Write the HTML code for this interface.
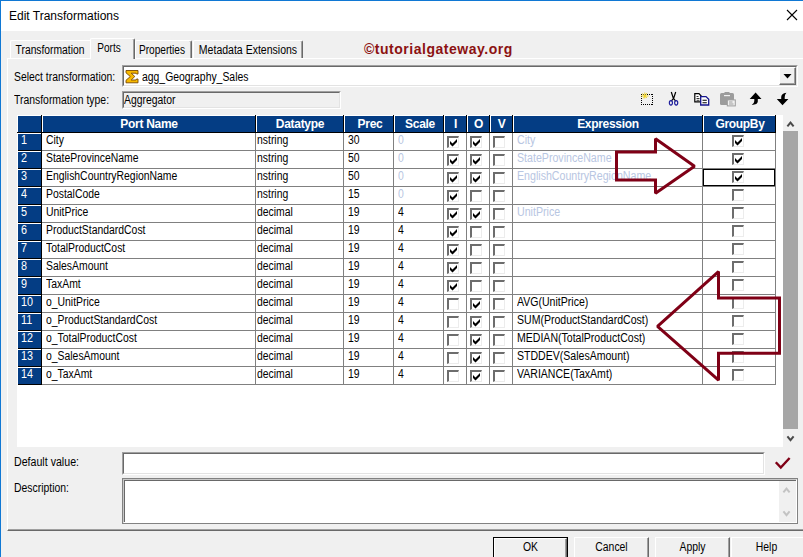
<!DOCTYPE html>
<html><head><meta charset="utf-8"><title>Edit Transformations</title>
<style>
html,body{margin:0;padding:0;}
body{width:803px;height:557px;overflow:hidden;background:#f0f0f0;position:relative;font-family:"Liberation Sans",sans-serif;font-size:12px;color:#000;}
div,span{position:absolute;box-sizing:border-box;white-space:nowrap;}
svg{position:absolute;overflow:visible;}
.t{line-height:14px;height:14px;transform:scaleX(.867);transform-origin:0 0;}
.tc{text-align:center;transform-origin:50% 0;}
.hd{color:#fff;font-weight:bold;font-size:12px;text-align:center;line-height:16px;height:16px;top:116px;letter-spacing:-0.3px;}
.vl{width:1px;background:#808080;top:133px;height:252px;}
.hl{height:1px;background:#808080;left:42px;width:734px;}
.hs{width:2px;top:115px;height:17px;border-left:1px solid #000;background:#fff;}
.cb{width:12px;height:12px;background:#fff;border-top:2px solid #6d6d6d;border-left:2px solid #6d6d6d;border-right:1px solid #ececec;border-bottom:1px solid #ececec;}
.ck{left:1px;top:1px;}
.btn{top:537px;height:24px;background:#f0f0f0;border-top:1px solid #fff;border-left:1px solid #fff;border-right:1px solid #696969;box-shadow:inset -1px 0 0 #a0a0a0;}
.dis{color:#b8c6e2;}
.blue{color:#1a4fb0;}
</style></head><body>

<div style="left:0;top:0;width:803px;height:31px;background:#fff;"></div>
<div style="left:0;top:0;width:803px;height:1px;background:#1078d4;"></div>
<div style="left:0;top:0;width:1px;height:557px;background:#1078d4;"></div>
<div style="left:9px;top:8px;font-size:12px;line-height:16px;height:16px;">Edit Transformations</div>
<svg style="left:786px;top:9px" width="12" height="12" viewBox="0 0 12 12"><path d="M1 1 L11 11 M11 1 L1 11" stroke="#000" stroke-width="1.1" fill="none"/></svg>
<div style="left:7px;top:58px;width:820px;height:473px;border-top:1px solid #fff;border-left:1px solid #fff;border-bottom:1px solid #696969;"></div>
<div style="left:8px;top:529px;width:820px;height:1px;background:#a0a0a0;"></div>
<div style="left:10px;top:40px;width:82px;height:18px;border-top:1px solid #fff;border-left:1px solid #fff;border-radius:2px 2px 0 0;"></div>
<div class="t tc " style="left:-10.200000000000003px;width:120.0px;top:42.7px;transform:scaleX(0.858);">Transformation</div>
<div style="left:135px;top:40px;width:57px;height:18px;border-top:1px solid #fff;border-left:1px solid #fff;border-right:1px solid #696969;box-shadow:inset -1px 0 0 #a0a0a0;border-radius:2px 2px 0 0;"></div>
<div class="t tc " style="left:102.4px;width:120.0px;top:42.7px;transform:scaleX(0.843);">Properties</div>
<div style="left:193px;top:40px;width:110px;height:18px;border-top:1px solid #fff;border-left:1px solid #fff;border-right:1px solid #696969;box-shadow:inset -1px 0 0 #a0a0a0;border-radius:2px 2px 0 0;"></div>
<div class="t tc " style="left:187.8px;width:120.0px;top:42.7px;transform:scaleX(0.877);">Metadata Extensions</div>
<div style="left:90px;top:38px;width:45px;height:21px;background:#f0f0f0;border-top:1px solid #fff;border-left:1px solid #fff;border-right:1px solid #696969;box-shadow:inset -1px 0 0 #a0a0a0;border-radius:2px 2px 0 0;"></div>
<div class="t tc " style="left:48.8px;width:120.00000000000001px;top:40.7px;transform:scaleX(0.838);">Ports</div>
<div style="left:364px;top:40px;font-size:14px;font-weight:bold;color:#8c1212;letter-spacing:0.520px;line-height:18px;">©tutorialgateway.org</div>
<div class="t " style="left:14px;top:69.7px;">Select transformation:</div>
<div style="left:122px;top:65px;width:676px;height:22px;background:#fff;border-top:1px solid #a0a0a0;border-left:1px solid #a0a0a0;border-right:1px solid #fff;border-bottom:1px solid #fff;"></div>
<div style="left:123px;top:66px;width:674px;height:20px;border-top:1px solid #696969;border-left:1px solid #696969;border-right:1px solid #e3e3e3;border-bottom:1px solid #e3e3e3;"></div>
<div class="t " style="left:142px;top:69.7px;">agg_Geography_Sales</div>
<svg style="left:125px;top:68px" width="15" height="16" viewBox="0 0 15 16"><path d="M1 2.500 H13 V6 H11.500 L11 5.200 H6.200 L9.800 8.500 L6.200 12 H11 L11.500 11 H13 V14.800 H1 V12.300 L5.300 8.500 L1 4.800 Z" fill="#f7b900" stroke="#7a4a00" stroke-width="0.900"/></svg>
<div style="left:779px;top:67px;width:17px;height:18px;background:#f0f0f0;border-top:1px solid #fff;border-left:1px solid #fff;border-right:1px solid #696969;border-bottom:1px solid #696969;box-shadow:inset -1px -1px 0 #a0a0a0;"></div>
<svg style="left:783px;top:74px" width="9" height="5" viewBox="0 0 9 5"><path d="M0.5 0 H8.5 L4.5 4.5 Z" fill="#000"/></svg>
<div class="t " style="left:14px;top:92.7px;">Transformation type:</div>
<div style="left:122px;top:91px;width:219px;height:18px;background:#f0f0f0;border-top:1px solid #a0a0a0;border-left:1px solid #a0a0a0;border-right:1px solid #fff;border-bottom:1px solid #fff;"></div>
<div style="left:123px;top:92px;width:217px;height:16px;border-top:1px solid #696969;border-left:1px solid #696969;border-right:1px solid #e3e3e3;border-bottom:1px solid #e3e3e3;"></div>
<div class="t " style="left:124px;top:92.7px;">Aggregator</div>
<svg style="left:638px;top:88px" width="155" height="22" viewBox="0 0 155 22">
<path d="M3 6.500 H15 M3 16.500 H15 M3.500 6 V17 M14.500 6 V17" fill="none" stroke="#000" stroke-width="1" stroke-dasharray="1 1" shape-rendering="crispEdges"/>
<path d="M4 5.500 L9 10 M9 5 L5 10.500 M6.800 4.500 V10.500 M3 8 H10.500" fill="none" stroke="#f0d21c" stroke-width="0.900"/>
<path d="M33.300 4 L35.400 10.500 L37.600 12.800 M37.700 4 L35.600 10.500 L33.400 12.800" fill="none" stroke="#000" stroke-width="1.200"/>
<g fill="none" stroke="#1c1c9c" stroke-width="1.150"><ellipse cx="32.900" cy="14.800" rx="1.550" ry="2.250"/><ellipse cx="38.200" cy="14.800" rx="1.550" ry="2.250"/></g>
<path d="M56.800 5.700 H61 L63.200 8 V13.900 H56.800 Z" fill="#fff" stroke="#000" stroke-width="1.200"/>
<path d="M58.500 8.500 H60.500 M58.500 10.500 H61.500 M58.500 12.300 H61.500" fill="none" stroke="#000" stroke-width="0.800"/>
<path d="M62.700 8.600 H68 L70.700 11.300 V17 H62.700 Z" fill="#fff" stroke="#14148c" stroke-width="1.300"/>
<path d="M64.500 12.300 H68.800 M64.500 14.700 H68.800" fill="none" stroke="#000" stroke-width="1.100"/>
<rect x="82" y="5" width="14" height="12" rx="1.500" fill="#9c9c9c"/>
<rect x="86.500" y="4" width="5" height="2" fill="#9c9c9c"/>
<path d="M86 7.600 H92" stroke="#f0f0f0" stroke-width="1.200" fill="none"/>
<rect x="89.300" y="11.900" width="8" height="6" fill="#f0f0f0" stroke="#9c9c9c" stroke-width="1"/>
<path d="M91 14 H94.500 M91 16 H95.500" stroke="#9c9c9c" stroke-width="1" fill="none"/>
<path d="M117.600 4.500 L123.500 11 H119.800 V13.500 Q119.800 16.500 113.700 17 Q116.300 15.500 116.300 13 V11 H111.700 Z" fill="#000"/>
<path d="M144.500 17.300 L138.800 11 H143.200 V9 Q143.200 5.500 148.400 4.700 Q146.700 6.500 146.700 9 V11 H150.400 Z" fill="#000"/>
</svg>
<div style="left:17px;top:115px;width:766px;height:332px;background:#fff;"></div>
<div style="left:18px;top:116px;width:757px;height:16px;background:#043d84;"></div>
<div style="left:17px;top:132px;width:759px;height:1px;background:#000;"></div>
<div style="left:775px;top:115px;width:1px;height:18px;background:#000;"></div>
<div style="left:18px;top:133px;width:23px;height:251px;background:#043d84;"></div>
<div style="left:41px;top:115px;width:1px;height:270px;background:#000;"></div>
<div style="left:18px;top:133px;width:23px;height:1px;background:#fff;"></div>
<div style="left:42px;top:116px;width:1px;height:16px;background:#fff;"></div>
<div class="hs" style="left:255px;"></div>
<div class="hs" style="left:343px;"></div>
<div class="hs" style="left:393px;"></div>
<div class="hs" style="left:443px;"></div>
<div class="hs" style="left:466px;"></div>
<div class="hs" style="left:489px;"></div>
<div class="hs" style="left:512px;"></div>
<div class="hs" style="left:702px;"></div>
<div class="hd" style="left:43px;width:212px;">Port Name</div>
<div class="hd" style="left:257px;width:86px;">Datatype</div>
<div class="hd" style="left:345px;width:50px;">Prec</div>
<div class="hd" style="left:397px;width:46px;">Scale</div>
<div class="hd" style="left:445px;width:21px;">I</div>
<div class="hd" style="left:468px;width:21px;">O</div>
<div class="hd" style="left:491px;width:21px;">V</div>
<div class="hd" style="left:514px;width:188px;">Expression</div>
<div class="hd" style="left:704px;width:72px;">GroupBy</div>
<div class="vl" style="left:255px;"></div>
<div class="vl" style="left:343px;"></div>
<div class="vl" style="left:393px;"></div>
<div class="vl" style="left:443px;"></div>
<div class="vl" style="left:466px;"></div>
<div class="vl" style="left:489px;"></div>
<div class="vl" style="left:512px;"></div>
<div class="vl" style="left:702px;"></div>
<div class="vl" style="left:775px;"></div>
<div class="hl" style="top:150px;"></div>
<div style="left:18px;top:150px;width:23px;height:1px;background:#000;"></div>
<div style="left:18px;top:151px;width:23px;height:1px;background:#fff;"></div>
<div class="hl" style="top:168px;"></div>
<div style="left:18px;top:168px;width:23px;height:1px;background:#000;"></div>
<div style="left:18px;top:169px;width:23px;height:1px;background:#fff;"></div>
<div class="hl" style="top:186px;"></div>
<div style="left:18px;top:186px;width:23px;height:1px;background:#000;"></div>
<div style="left:18px;top:187px;width:23px;height:1px;background:#fff;"></div>
<div class="hl" style="top:204px;"></div>
<div style="left:18px;top:204px;width:23px;height:1px;background:#000;"></div>
<div style="left:18px;top:205px;width:23px;height:1px;background:#fff;"></div>
<div class="hl" style="top:222px;"></div>
<div style="left:18px;top:222px;width:23px;height:1px;background:#000;"></div>
<div style="left:18px;top:223px;width:23px;height:1px;background:#fff;"></div>
<div class="hl" style="top:240px;"></div>
<div style="left:18px;top:240px;width:23px;height:1px;background:#000;"></div>
<div style="left:18px;top:241px;width:23px;height:1px;background:#fff;"></div>
<div class="hl" style="top:258px;"></div>
<div style="left:18px;top:258px;width:23px;height:1px;background:#000;"></div>
<div style="left:18px;top:259px;width:23px;height:1px;background:#fff;"></div>
<div class="hl" style="top:276px;"></div>
<div style="left:18px;top:276px;width:23px;height:1px;background:#000;"></div>
<div style="left:18px;top:277px;width:23px;height:1px;background:#fff;"></div>
<div class="hl" style="top:294px;"></div>
<div style="left:18px;top:294px;width:23px;height:1px;background:#000;"></div>
<div style="left:18px;top:295px;width:23px;height:1px;background:#fff;"></div>
<div class="hl" style="top:312px;"></div>
<div style="left:18px;top:312px;width:23px;height:1px;background:#000;"></div>
<div style="left:18px;top:313px;width:23px;height:1px;background:#fff;"></div>
<div class="hl" style="top:330px;"></div>
<div style="left:18px;top:330px;width:23px;height:1px;background:#000;"></div>
<div style="left:18px;top:331px;width:23px;height:1px;background:#fff;"></div>
<div class="hl" style="top:348px;"></div>
<div style="left:18px;top:348px;width:23px;height:1px;background:#000;"></div>
<div style="left:18px;top:349px;width:23px;height:1px;background:#fff;"></div>
<div class="hl" style="top:366px;"></div>
<div style="left:18px;top:366px;width:23px;height:1px;background:#000;"></div>
<div style="left:18px;top:367px;width:23px;height:1px;background:#fff;"></div>
<div class="hl" style="top:384px;"></div>
<div style="left:18px;top:384px;width:23px;height:1px;background:#000;"></div>
<div class="t " style="left:20.5px;top:132.7px;color:#fff;transform:scaleX(.900);">1</div>
<div class="t " style="left:46px;top:132.7px;">City</div>
<div class="t " style="left:257px;top:132.7px;">nstring</div>
<div class="t " style="left:348px;top:132.7px;">30</div>
<div class="t dis" style="left:398px;top:132.7px;">0</div>
<div class="cb" style="left:447px;top:136px;"><svg class="ck" width="8" height="8" viewBox="0 0 8 8"><path d="M0 2 L2.500 4.500 L7 0 V3 L2.500 7.500 L0 5 Z" fill="#000"/></svg></div>
<div class="cb" style="left:470px;top:136px;"><svg class="ck" width="8" height="8" viewBox="0 0 8 8"><path d="M0 2 L2.500 4.500 L7 0 V3 L2.500 7.500 L0 5 Z" fill="#000"/></svg></div>
<div class="cb" style="left:493px;top:136px;"></div>
<div class="t dis" style="left:517px;top:132.7px;transform:scaleX(0.886);">City</div>
<div class="cb" style="left:732px;top:135px;"><svg class="ck" width="8" height="8" viewBox="0 0 8 8"><path d="M0 2 L2.500 4.500 L7 0 V3 L2.500 7.500 L0 5 Z" fill="#000"/></svg></div>
<div class="t " style="left:20.5px;top:150.7px;color:#fff;transform:scaleX(.900);">2</div>
<div class="t " style="left:46px;top:150.7px;">StateProvinceName</div>
<div class="t " style="left:257px;top:150.7px;">nstring</div>
<div class="t " style="left:348px;top:150.7px;">50</div>
<div class="t dis" style="left:398px;top:150.7px;">0</div>
<div class="cb" style="left:447px;top:154px;"><svg class="ck" width="8" height="8" viewBox="0 0 8 8"><path d="M0 2 L2.500 4.500 L7 0 V3 L2.500 7.500 L0 5 Z" fill="#000"/></svg></div>
<div class="cb" style="left:470px;top:154px;"><svg class="ck" width="8" height="8" viewBox="0 0 8 8"><path d="M0 2 L2.500 4.500 L7 0 V3 L2.500 7.500 L0 5 Z" fill="#000"/></svg></div>
<div class="cb" style="left:493px;top:154px;"></div>
<div class="t dis" style="left:517px;top:150.7px;transform:scaleX(0.886);">StateProvinceName</div>
<div class="cb" style="left:732px;top:153px;"><svg class="ck" width="8" height="8" viewBox="0 0 8 8"><path d="M0 2 L2.500 4.500 L7 0 V3 L2.500 7.500 L0 5 Z" fill="#000"/></svg></div>
<div class="t " style="left:20.5px;top:168.7px;color:#fff;transform:scaleX(.900);">3</div>
<div class="t " style="left:46px;top:168.7px;">EnglishCountryRegionName</div>
<div class="t " style="left:257px;top:168.7px;">nstring</div>
<div class="t " style="left:348px;top:168.7px;">50</div>
<div class="t dis" style="left:398px;top:168.7px;">0</div>
<div class="cb" style="left:447px;top:172px;"><svg class="ck" width="8" height="8" viewBox="0 0 8 8"><path d="M0 2 L2.500 4.500 L7 0 V3 L2.500 7.500 L0 5 Z" fill="#000"/></svg></div>
<div class="cb" style="left:470px;top:172px;"><svg class="ck" width="8" height="8" viewBox="0 0 8 8"><path d="M0 2 L2.500 4.500 L7 0 V3 L2.500 7.500 L0 5 Z" fill="#000"/></svg></div>
<div class="cb" style="left:493px;top:172px;"></div>
<div class="t dis" style="left:517px;top:168.7px;transform:scaleX(0.886);">EnglishCountryRegionName</div>
<div class="cb" style="left:732px;top:171px;"><svg class="ck" width="8" height="8" viewBox="0 0 8 8"><path d="M0 2 L2.500 4.500 L7 0 V3 L2.500 7.500 L0 5 Z" fill="#000"/></svg></div>
<div class="t " style="left:20.5px;top:186.7px;color:#fff;transform:scaleX(.900);">4</div>
<div class="t " style="left:46px;top:186.7px;">PostalCode</div>
<div class="t " style="left:257px;top:186.7px;">nstring</div>
<div class="t " style="left:348px;top:186.7px;">15</div>
<div class="t dis" style="left:398px;top:186.7px;">0</div>
<div class="cb" style="left:447px;top:190px;"><svg class="ck" width="8" height="8" viewBox="0 0 8 8"><path d="M0 2 L2.500 4.500 L7 0 V3 L2.500 7.500 L0 5 Z" fill="#000"/></svg></div>
<div class="cb" style="left:470px;top:190px;"></div>
<div class="cb" style="left:493px;top:190px;"></div>
<div class="cb" style="left:732px;top:189px;"></div>
<div class="t " style="left:20.5px;top:204.7px;color:#fff;transform:scaleX(.900);">5</div>
<div class="t " style="left:46px;top:204.7px;">UnitPrice</div>
<div class="t " style="left:257px;top:204.7px;">decimal</div>
<div class="t " style="left:348px;top:204.7px;">19</div>
<div class="t " style="left:398px;top:204.7px;">4</div>
<div class="cb" style="left:447px;top:208px;"><svg class="ck" width="8" height="8" viewBox="0 0 8 8"><path d="M0 2 L2.500 4.500 L7 0 V3 L2.500 7.500 L0 5 Z" fill="#000"/></svg></div>
<div class="cb" style="left:470px;top:208px;"><svg class="ck" width="8" height="8" viewBox="0 0 8 8"><path d="M0 2 L2.500 4.500 L7 0 V3 L2.500 7.500 L0 5 Z" fill="#000"/></svg></div>
<div class="cb" style="left:493px;top:208px;"></div>
<div class="t dis" style="left:517px;top:204.7px;transform:scaleX(0.886);">UnitPrice</div>
<div class="cb" style="left:732px;top:207px;"></div>
<div class="t " style="left:20.5px;top:222.7px;color:#fff;transform:scaleX(.900);">6</div>
<div class="t " style="left:46px;top:222.7px;">ProductStandardCost</div>
<div class="t " style="left:257px;top:222.7px;">decimal</div>
<div class="t " style="left:348px;top:222.7px;">19</div>
<div class="t " style="left:398px;top:222.7px;">4</div>
<div class="cb" style="left:447px;top:226px;"><svg class="ck" width="8" height="8" viewBox="0 0 8 8"><path d="M0 2 L2.500 4.500 L7 0 V3 L2.500 7.500 L0 5 Z" fill="#000"/></svg></div>
<div class="cb" style="left:470px;top:226px;"></div>
<div class="cb" style="left:493px;top:226px;"></div>
<div class="cb" style="left:732px;top:225px;"></div>
<div class="t " style="left:20.5px;top:240.7px;color:#fff;transform:scaleX(.900);">7</div>
<div class="t " style="left:46px;top:240.7px;">TotalProductCost</div>
<div class="t " style="left:257px;top:240.7px;">decimal</div>
<div class="t " style="left:348px;top:240.7px;">19</div>
<div class="t " style="left:398px;top:240.7px;">4</div>
<div class="cb" style="left:447px;top:244px;"><svg class="ck" width="8" height="8" viewBox="0 0 8 8"><path d="M0 2 L2.500 4.500 L7 0 V3 L2.500 7.500 L0 5 Z" fill="#000"/></svg></div>
<div class="cb" style="left:470px;top:244px;"></div>
<div class="cb" style="left:493px;top:244px;"></div>
<div class="cb" style="left:732px;top:243px;"></div>
<div class="t " style="left:20.5px;top:258.7px;color:#fff;transform:scaleX(.900);">8</div>
<div class="t " style="left:46px;top:258.7px;">SalesAmount</div>
<div class="t " style="left:257px;top:258.7px;">decimal</div>
<div class="t " style="left:348px;top:258.7px;">19</div>
<div class="t " style="left:398px;top:258.7px;">4</div>
<div class="cb" style="left:447px;top:262px;"><svg class="ck" width="8" height="8" viewBox="0 0 8 8"><path d="M0 2 L2.500 4.500 L7 0 V3 L2.500 7.500 L0 5 Z" fill="#000"/></svg></div>
<div class="cb" style="left:470px;top:262px;"></div>
<div class="cb" style="left:493px;top:262px;"></div>
<div class="cb" style="left:732px;top:261px;"></div>
<div class="t " style="left:20.5px;top:276.7px;color:#fff;transform:scaleX(.900);">9</div>
<div class="t " style="left:46px;top:276.7px;">TaxAmt</div>
<div class="t " style="left:257px;top:276.7px;">decimal</div>
<div class="t " style="left:348px;top:276.7px;">19</div>
<div class="t " style="left:398px;top:276.7px;">4</div>
<div class="cb" style="left:447px;top:280px;"><svg class="ck" width="8" height="8" viewBox="0 0 8 8"><path d="M0 2 L2.500 4.500 L7 0 V3 L2.500 7.500 L0 5 Z" fill="#000"/></svg></div>
<div class="cb" style="left:470px;top:280px;"></div>
<div class="cb" style="left:493px;top:280px;"></div>
<div class="cb" style="left:732px;top:279px;"></div>
<div class="t " style="left:20.5px;top:294.7px;color:#fff;transform:scaleX(.900);">10</div>
<div class="t " style="left:46px;top:294.7px;">o_UnitPrice</div>
<div class="t " style="left:257px;top:294.7px;">decimal</div>
<div class="t " style="left:348px;top:294.7px;">19</div>
<div class="t " style="left:398px;top:294.7px;">4</div>
<div class="cb" style="left:447px;top:298px;"></div>
<div class="cb" style="left:470px;top:298px;"><svg class="ck" width="8" height="8" viewBox="0 0 8 8"><path d="M0 2 L2.500 4.500 L7 0 V3 L2.500 7.500 L0 5 Z" fill="#000"/></svg></div>
<div class="cb" style="left:493px;top:298px;"></div>
<div class="t " style="left:517px;top:294.7px;transform:scaleX(0.879);">AVG(UnitPrice)</div>
<div class="cb" style="left:732px;top:297px;"></div>
<div class="t " style="left:20.5px;top:312.7px;color:#fff;transform:scaleX(.900);">11</div>
<div class="t " style="left:46px;top:312.7px;">o_ProductStandardCost</div>
<div class="t " style="left:257px;top:312.7px;">decimal</div>
<div class="t " style="left:348px;top:312.7px;">19</div>
<div class="t " style="left:398px;top:312.7px;">4</div>
<div class="cb" style="left:447px;top:316px;"></div>
<div class="cb" style="left:470px;top:316px;"><svg class="ck" width="8" height="8" viewBox="0 0 8 8"><path d="M0 2 L2.500 4.500 L7 0 V3 L2.500 7.500 L0 5 Z" fill="#000"/></svg></div>
<div class="cb" style="left:493px;top:316px;"></div>
<div class="t " style="left:517px;top:312.7px;transform:scaleX(0.879);">SUM(ProductStandardCost)</div>
<div class="cb" style="left:732px;top:315px;"></div>
<div class="t " style="left:20.5px;top:330.7px;color:#fff;transform:scaleX(.900);">12</div>
<div class="t " style="left:46px;top:330.7px;">o_TotalProductCost</div>
<div class="t " style="left:257px;top:330.7px;">decimal</div>
<div class="t " style="left:348px;top:330.7px;">19</div>
<div class="t " style="left:398px;top:330.7px;">4</div>
<div class="cb" style="left:447px;top:334px;"></div>
<div class="cb" style="left:470px;top:334px;"><svg class="ck" width="8" height="8" viewBox="0 0 8 8"><path d="M0 2 L2.500 4.500 L7 0 V3 L2.500 7.500 L0 5 Z" fill="#000"/></svg></div>
<div class="cb" style="left:493px;top:334px;"></div>
<div class="t " style="left:517px;top:330.7px;transform:scaleX(0.879);">MEDIAN(TotalProductCost)</div>
<div class="cb" style="left:732px;top:333px;"></div>
<div class="t " style="left:20.5px;top:348.7px;color:#fff;transform:scaleX(.900);">13</div>
<div class="t " style="left:46px;top:348.7px;">o_SalesAmount</div>
<div class="t " style="left:257px;top:348.7px;">decimal</div>
<div class="t " style="left:348px;top:348.7px;">19</div>
<div class="t " style="left:398px;top:348.7px;">4</div>
<div class="cb" style="left:447px;top:352px;"></div>
<div class="cb" style="left:470px;top:352px;"><svg class="ck" width="8" height="8" viewBox="0 0 8 8"><path d="M0 2 L2.500 4.500 L7 0 V3 L2.500 7.500 L0 5 Z" fill="#000"/></svg></div>
<div class="cb" style="left:493px;top:352px;"></div>
<div class="t " style="left:517px;top:348.7px;transform:scaleX(0.879);">STDDEV(SalesAmount)</div>
<div class="cb" style="left:732px;top:351px;"></div>
<div class="t " style="left:20.5px;top:366.7px;color:#fff;transform:scaleX(.900);">14</div>
<div class="t " style="left:46px;top:366.7px;">o_TaxAmt</div>
<div class="t " style="left:257px;top:366.7px;">decimal</div>
<div class="t " style="left:348px;top:366.7px;">19</div>
<div class="t " style="left:398px;top:366.7px;">4</div>
<div class="cb" style="left:447px;top:370px;"></div>
<div class="cb" style="left:470px;top:370px;"><svg class="ck" width="8" height="8" viewBox="0 0 8 8"><path d="M0 2 L2.500 4.500 L7 0 V3 L2.500 7.500 L0 5 Z" fill="#000"/></svg></div>
<div class="cb" style="left:493px;top:370px;"></div>
<div class="t " style="left:517px;top:366.7px;transform:scaleX(0.879);">VARIANCE(TaxAmt)</div>
<div class="cb" style="left:732px;top:369px;"></div>
<div style="left:702.600px;top:168.600px;width:72.700px;height:17.500px;border:1.700px solid #000;"></div>
<div style="left:783px;top:115px;width:16px;height:332px;background:#f0f0f0;"></div>
<div style="left:783px;top:131px;width:15px;height:298px;background:#a6a6a6;"></div>
<svg style="left:785px;top:119px" width="12" height="10" viewBox="0 0 12 10"><path d="M2.400 7.400 L5.500 3.600 L8.600 7.400" stroke="#4a4a4a" stroke-width="2" fill="none"/></svg>
<svg style="left:785px;top:433px" width="12" height="10" viewBox="0 0 12 10"><path d="M2.400 3.400 L5.500 7.200 L8.600 3.400" stroke="#4a4a4a" stroke-width="2" fill="none"/></svg>
<svg style="left:0;top:0" width="803" height="557" viewBox="0 0 803 557">
<g fill="none" stroke="#7f0016" stroke-width="3" stroke-linejoin="miter" stroke-miterlimit="1.450">
<path d="M616.500 152 H655.500 V138.700 L694.500 166.200 L655.500 193.300 V179.900 H616.500 Z"/>
<path d="M779.500 298 H718.500 V271.600 L657.500 326.400 L718.500 380.200 V353.300 H779.500 Z"/>
</g>
</svg>
<div class="t " style="left:14px;top:454.7px;transform:scaleX(0.886);">Default value:</div>
<div style="left:122px;top:452px;width:643px;height:23px;background:#fff;border-top:1px solid #a0a0a0;border-left:1px solid #a0a0a0;border-right:1px solid #fff;border-bottom:1px solid #fff;"></div>
<div style="left:123px;top:453px;width:641px;height:21px;border-top:1px solid #696969;border-left:1px solid #696969;border-right:1px solid #e3e3e3;border-bottom:1px solid #e3e3e3;"></div>
<svg style="left:773px;top:455px" width="20" height="16" viewBox="0 0 20 16"><path d="M2.800 7.300 L7.800 12.600 L16.600 3" stroke="#7f0016" stroke-width="2.400" fill="none"/></svg>
<div class="t " style="left:14px;top:480.7px;">Description:</div>
<div style="left:122px;top:478px;width:676px;height:46px;background:#fff;border:1px solid #828282;"></div>
<div style="left:123px;top:479px;width:674px;height:44px;border-top:1px solid #c8c8c8;border-left:1px solid #c8c8c8;border-right:1px solid #fff;border-bottom:1px solid #fff;"></div>
<div style="left:124px;top:480px;width:672px;height:42px;border-top:1px solid #696969;border-left:1px solid #696969;"></div>
<div style="left:779px;top:481px;width:17px;height:41px;background:#f0f0f0;"></div>
<svg style="left:781px;top:485px" width="12" height="10" viewBox="0 0 12 10"><path d="M2.400 7.400 L5.500 3.600 L8.600 7.400" stroke="#c3c3c3" stroke-width="2" fill="none"/></svg>
<svg style="left:781px;top:507.500px" width="12" height="10" viewBox="0 0 12 10"><path d="M2.400 3.400 L5.500 7.200 L8.600 3.400" stroke="#c3c3c3" stroke-width="2" fill="none"/></svg>
<div style="left:493px;top:537px;width:75px;height:24px;border:1px solid #000;"></div>
<div class="btn" style="left:494px;width:73px;top:538px;"></div>
<div class="btn" style="left:574px;width:75px;"></div>
<div class="btn" style="left:655px;width:75px;"></div>
<div class="btn" style="left:731px;width:75px;"></div>
<div class="t tc " style="left:493px;width:75px;top:539.7px;">OK</div>
<div class="t tc " style="left:574px;width:75px;top:539.7px;">Cancel</div>
<div class="t tc " style="left:655px;width:75px;top:539.7px;">Apply</div>
<div class="t tc " style="left:731px;width:71px;top:539.7px;">Help</div>
</body></html>
